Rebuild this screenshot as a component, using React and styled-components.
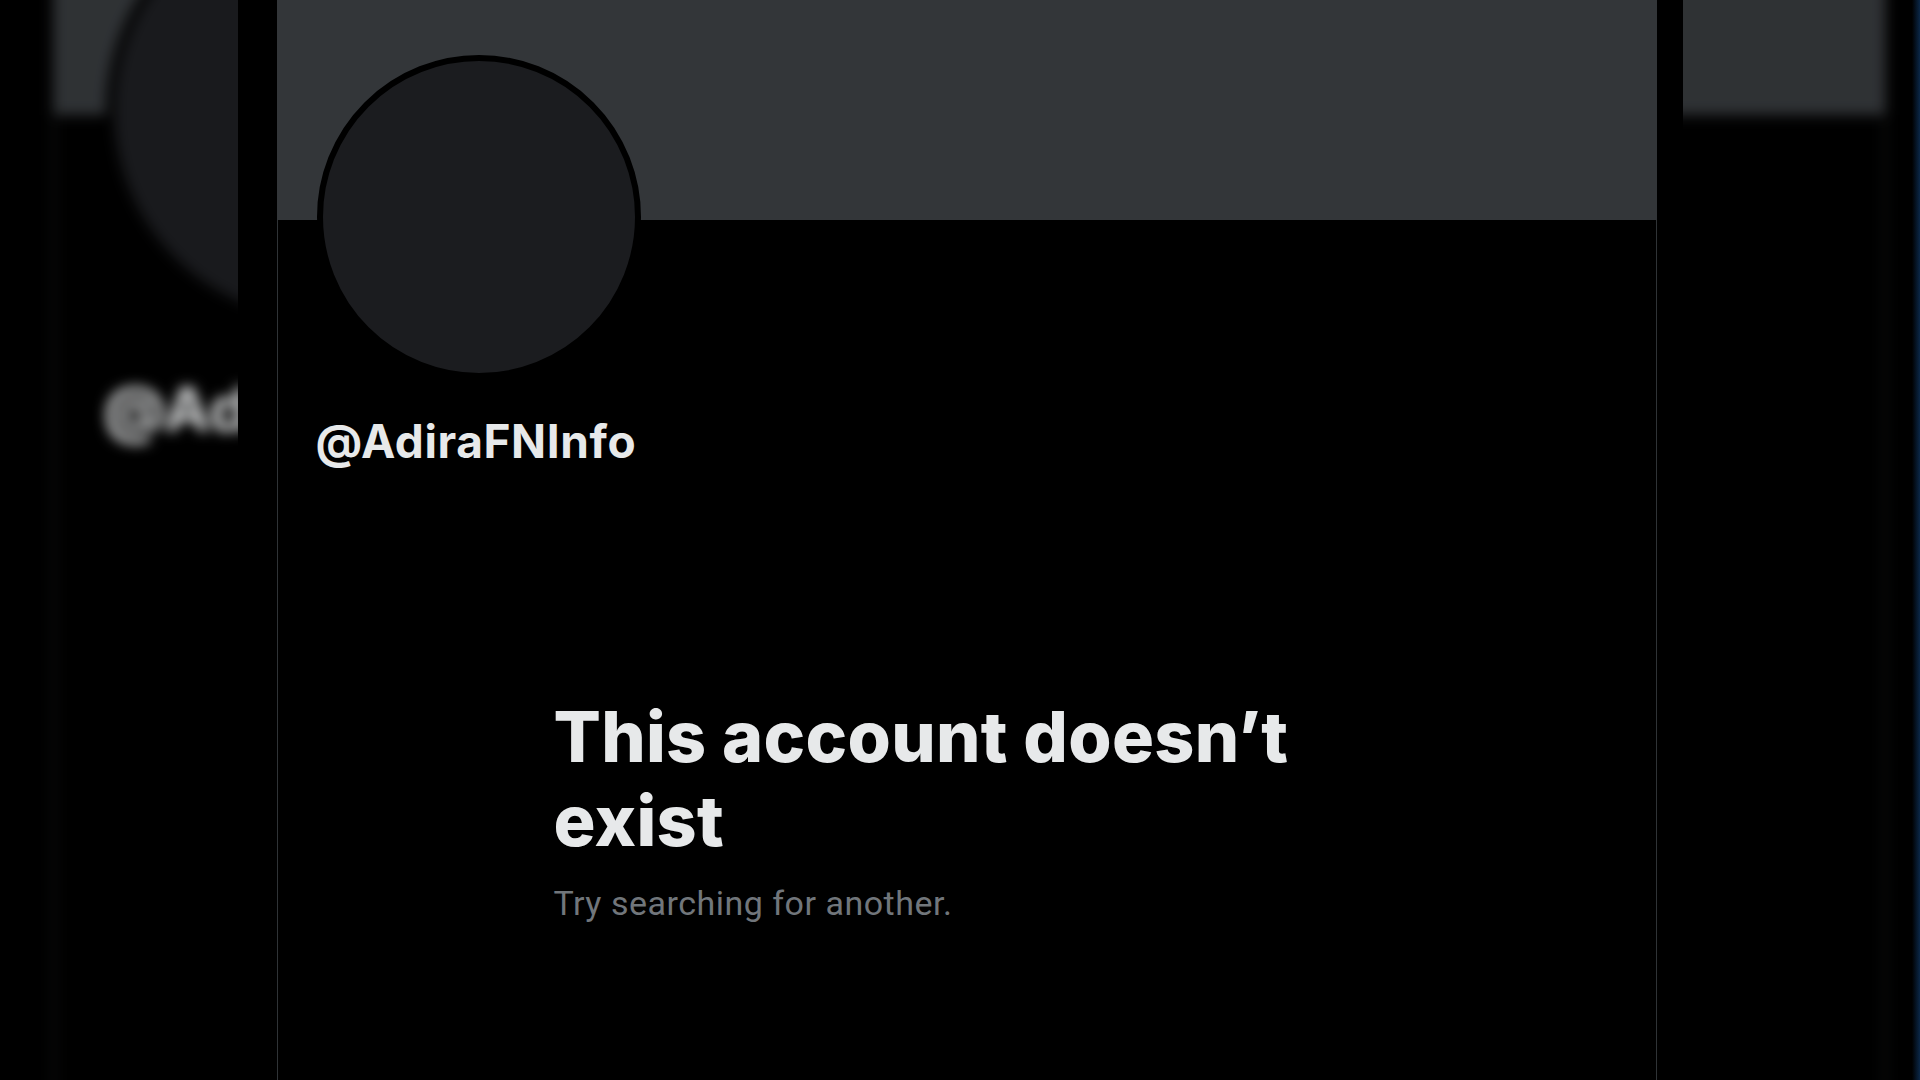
import React from 'react';
import styled, { createGlobalStyle } from 'styled-components';

const GlobalStyle = createGlobalStyle`
  html, body {
    margin: 0;
    padding: 0;
    background: #000;
  }
  * {
    box-sizing: border-box;
  }
`

const Stage = styled.main`
  position: relative;
  width: 100%;
  height: 100vh;
  overflow: hidden;
  background: #000;
  display: flex;
  justify-content: center;
  &::after {
    content: '';
    position: absolute;
    top: 0;
    right: 0;
    bottom: 0;
    width: 8px;
    background: linear-gradient(to right, rgba(0,0,0,0), rgba(12,44,80,0.9));
  }
`

// blurred, enlarged copy of the frame that fills the sides
const Backdrop = styled.div`
  position: absolute;
  inset: 0;
  display: flex;
  justify-content: center;
  transform: scale(1.328);
  filter: blur(5px) brightness(0.92);
  pointer-events: none;
`

const Frame = styled.div`
  position: relative;
  width: 1445px;
  height: 1080px;
  flex-shrink: 0;
  background: #000;
  padding: 0 26px 0 39px;
  display: flex;
`

const Panel = styled.section`
  width: 1380px;
  height: 100%;
  display: flex;
  flex-direction: column;
  border-left: 1px solid #2f3336;
  border-right: 1px solid #2f3336;
`

const Banner = styled.div`
  height: 220px;
  margin: 0 -1px;
  background: #333639;
`

const AvatarRow = styled.div`
  margin-top: -165px;
  padding-left: 39px;
`

const Avatar = styled.div`
  width: 324px;
  height: 324px;
  border-radius: 50%;
  border: 6px solid #000;
  background: #1b1c1f;
`

const Handle = styled.div`
  margin-top: 34px;
  padding-left: 38px;
  font-family: Inter, "Liberation Sans", sans-serif;
  font-weight: 700;
  font-size: 46px;
  line-height: 56px;
  letter-spacing: 0.6px;
  color: #e7e9ea;
`

const EmptyState = styled.div`
  width: 826px;
  margin: 226px auto 0;
`

const Headline = styled.h1`
  margin: 0;
  font-family: Inter, "Liberation Sans", sans-serif;
  font-weight: 800;
  font-size: 70px;
  line-height: 84px;
  letter-spacing: 0.3px;
  color: #e7e9ea;
`

const Hint = styled.p`
  margin: 20px 0 0;
  font-family: Roboto, "Liberation Sans", sans-serif;
  font-weight: 400;
  font-size: 34px;
  line-height: 40px;
  letter-spacing: 0.5px;
  color: #71767b;
`

const Profile = ({ handle }) => (
  <Panel>
    <Banner />
    <AvatarRow>
      <Avatar />
    </AvatarRow>
    <Handle>{handle}</Handle>
    <EmptyState>
      <Headline>This account doesn’t exist</Headline>
      <Hint>Try searching for another.</Hint>
    </EmptyState>
  </Panel>
)

const App = () => {
  return (
    <>
      <GlobalStyle />
      <Stage>
        <Backdrop aria-hidden="true">
          <Frame>
            <Profile handle="@AdiraFNInfo" />
          </Frame>
        </Backdrop>
        <Frame>
          <Profile handle="@AdiraFNInfo" />
        </Frame>
      </Stage>
    </>
  )
}

export default App
